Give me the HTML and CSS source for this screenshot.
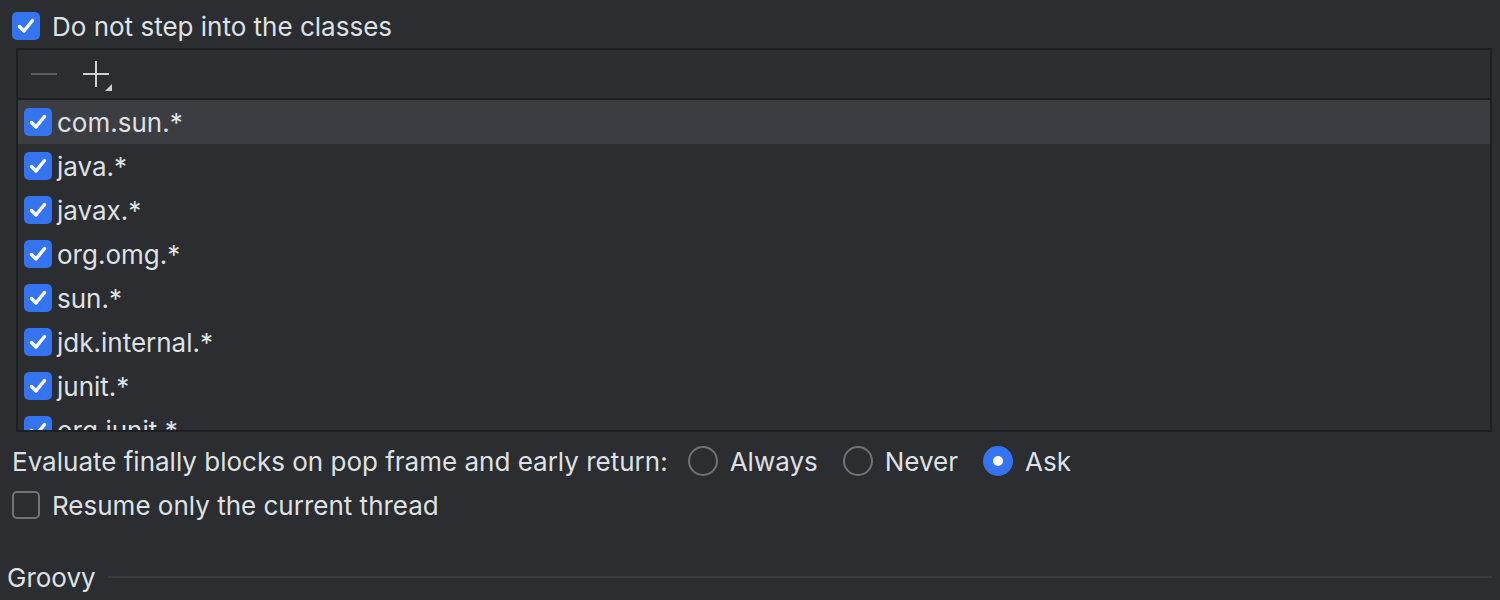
FILE: index.html
```html
<!DOCTYPE html>
<html>
<head>
<meta charset="utf-8">
<link rel="stylesheet" href="styles.css">
</head>
<body>
<div class="page">
  <label class="option top-option">
    <span class="cb checked"><svg viewBox="0 0 28 28"><path d="M7.5 14.5 L12 19 L20.5 8.5"/></svg></span>
    <span class="label">Do not step into the classes</span>
  </label>

  <div class="listbox">
    <div class="toolbar">
      <span class="tb-btn minus"><svg viewBox="0 0 28 28"><path d="M1 14 H27"/></svg></span>
      <span class="tb-btn plus"><svg viewBox="0 0 32 32"><path d="M14 1 V27 M1 14 H27"/><path class="tri" d="M30 24 V31 H23 Z"/></svg></span>
    </div>
    <div class="rows">
      <div class="row selected"><span class="cb checked"><svg viewBox="0 0 28 28"><path d="M7.5 14.5 L12 19 L20.5 8.5"/></svg></span><span class="label">com.sun.*</span></div>
      <div class="row"><span class="cb checked"><svg viewBox="0 0 28 28"><path d="M7.5 14.5 L12 19 L20.5 8.5"/></svg></span><span class="label">java.*</span></div>
      <div class="row"><span class="cb checked"><svg viewBox="0 0 28 28"><path d="M7.5 14.5 L12 19 L20.5 8.5"/></svg></span><span class="label">javax.*</span></div>
      <div class="row"><span class="cb checked"><svg viewBox="0 0 28 28"><path d="M7.5 14.5 L12 19 L20.5 8.5"/></svg></span><span class="label">org.omg.*</span></div>
      <div class="row"><span class="cb checked"><svg viewBox="0 0 28 28"><path d="M7.5 14.5 L12 19 L20.5 8.5"/></svg></span><span class="label">sun.*</span></div>
      <div class="row"><span class="cb checked"><svg viewBox="0 0 28 28"><path d="M7.5 14.5 L12 19 L20.5 8.5"/></svg></span><span class="label">jdk.internal.*</span></div>
      <div class="row"><span class="cb checked"><svg viewBox="0 0 28 28"><path d="M7.5 14.5 L12 19 L20.5 8.5"/></svg></span><span class="label">junit.*</span></div>
      <div class="row"><span class="cb checked"><svg viewBox="0 0 28 28"><path d="M7.5 14.5 L12 19 L20.5 8.5"/></svg></span><span class="label">org.junit.*</span></div>
    </div>
  </div>

  <div class="radio-row">
    <span class="label">Evaluate finally blocks on pop frame and early return:</span>
    <label class="radio"><span class="rb"></span><span class="label">Always</span></label>
    <label class="radio"><span class="rb"></span><span class="label">Never</span></label>
    <label class="radio"><span class="rb on"></span><span class="label">Ask</span></label>
  </div>

  <label class="option resume-option">
    <span class="cb"></span>
    <span class="label">Resume only the current thread</span>
  </label>

  <div class="section">
    <span class="label">Groovy</span>
    <span class="sep"></span>
  </div>
</div>
</body>
</html>
```

FILE: styles.css
```css
* { box-sizing: border-box; }
html, body {
  margin: 0;
  padding: 0;
  background: #2b2d30;
}
body {
  width: 1500px;
  height: 600px;
  overflow: hidden;
  font-family: Inter, "Noto Sans", sans-serif;
  font-size: 26px;
  color: #dfe1e5;
}
.page {
  display: flex;
  flex-direction: column;
}
.option {
  display: flex;
  align-items: center;
  gap: 12px;
  height: 44px;
  padding-left: 12px;
}
.top-option {
  margin-top: 4px;
}
.cb {
  width: 28px;
  height: 28px;
  border-radius: 5px;
  border: 2px solid #6f737a;
  flex: none;
  display: flex;
}
.cb.checked {
  background: #3574f0;
  border-color: #3574f0;
}
.cb svg {
  width: 28px;
  height: 28px;
  margin: -2px;
}
.cb svg path {
  fill: none;
  stroke: #ffffff;
  stroke-width: 3.4;
  stroke-linecap: round;
  stroke-linejoin: round;
}
.listbox {
  margin-left: 16px;
  width: 1476px;
  height: 384px;
  border: 2px solid #1e1f22;
  display: flex;
  flex-direction: column;
  overflow: hidden;
}
.toolbar {
  height: 50px;
  flex: none;
  border-bottom: 2px solid #1e1f22;
  display: flex;
  align-items: center;
  padding-left: 12px;
  gap: 24px;
}
.tb-btn {
  display: flex;
}
.tb-btn.minus svg {
  width: 28px;
  height: 28px;
}
.tb-btn.minus path {
  stroke: #5a5d63;
  stroke-width: 2;
}
.tb-btn.plus svg {
  width: 32px;
  height: 32px;
  margin-top: 4px;
}
.tb-btn.plus path {
  stroke: #ced0d6;
  stroke-width: 2;
  fill: none;
}
.tb-btn.plus path.tri {
  stroke: none;
  fill: #ced0d6;
}
.rows {
  display: flex;
  flex-direction: column;
}
.row {
  height: 44px;
  flex: none;
  display: flex;
  align-items: center;
  padding-left: 6px;
  gap: 5px;
}
.row.selected {
  background: #3b3d42;
}
.radio-row {
  display: flex;
  align-items: center;
  height: 44px;
  margin-top: 7px;
  padding-left: 12px;
}
.radio-row > .label {
  margin-right: 20px;
}
.radio {
  display: flex;
  align-items: center;
  gap: 12px;
  margin-right: 25px;
}
.rb {
  width: 30px;
  height: 30px;
  border-radius: 50%;
  border: 2px solid #6f737a;
  flex: none;
  display: flex;
  align-items: center;
  justify-content: center;
}
.rb.on {
  background: #3574f0;
  border-color: #3574f0;
}
.rb.on::after {
  content: "";
  width: 10px;
  height: 10px;
  border-radius: 50%;
  background: #ffffff;
}
.resume-option {
  height: 44px;
}
.section {
  display: flex;
  align-items: center;
  margin-top: 28px;
  padding-left: 7px;
  height: 44px;
  gap: 12px;
}
.sep {
  width: 1386px;
  height: 2px;
  background: #393b40;
  margin-left: auto;
  margin-right: 8px;
}
```
